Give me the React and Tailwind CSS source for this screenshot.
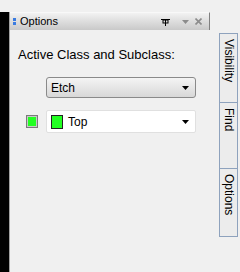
import React from "react";

function Pin() {
  return (
    <svg width="9" height="8" viewBox="0 0 9 8" className="block">
      <rect x="0" y="1" width="9" height="1" fill="#000" />
      <rect x="4" y="1" width="1" height="7" fill="#000" />
      <rect x="2" y="2" width="5" height="3" fill="none" stroke="#000" strokeWidth="1" />
    </svg>
  );
}

function Arrow({ color = "#000" }) {
  return (
    <svg width="7" height="4" viewBox="0 0 7 4" className="block">
      <path d="M0 0H7L3.5 4Z" fill={color} />
    </svg>
  );
}

function CloseX() {
  return (
    <svg width="7" height="7" viewBox="0 0 7 7" className="block">
      <path d="M0.5 0.5L6.5 6.5M6.5 0.5L0.5 6.5" stroke="#8c8c8c" strokeWidth="1.6" />
    </svg>
  );
}

export default function App() {
  return (
    <div className="w-[240px] h-[272px] bg-[#f0f0f0] flex overflow-hidden font-['Liberation_Sans',sans-serif] text-[12px] text-black">
      {/* left black strip */}
      <div className="w-[9px] flex flex-col">
        <div className="h-[12px]" />
        <div className="flex-1 bg-black" />
      </div>
      <div className="w-px flex flex-col">
        <div className="h-[12px]" />
        <div className="flex-1 bg-[#a0a0a0]" />
      </div>

      {/* main panel */}
      <div className="w-[200px] flex flex-col">
        <div className="h-[12px]" />
        <div className="h-[18px] flex items-center border-t border-[#f8f8f8] border-r border-r-[#808080] bg-gradient-to-b from-[#f2f2f2] to-[#c9c9c9]">
          <div className="ml-[3px] flex flex-col gap-[1px]">
            <div className="w-[3px] h-[3px] bg-[#3a7be0]" />
            <div className="w-[3px] h-[3px] bg-[#3a7be0]" />
          </div>
          <span className="ml-[4px] text-[11px] leading-none">Options</span>
          <div className="ml-auto flex items-center">
            <div className="mr-[12px]"><Pin /></div>
            <div className="mr-[6px]"><Arrow color="#8c8c8c" /></div>
            <div className="mr-[7px]"><CloseX /></div>
          </div>
        </div>

        <div className="pl-[8px] pt-[18px] text-[13px] leading-[14px]">Active Class and Subclass:</div>

        <div className="mt-[15px] ml-[36px] w-[150px] h-[21px] rounded-[3px] border border-[#8a8a8a] bg-gradient-to-b from-[#f4f4f4] to-[#d8d8d8] flex items-center pl-[4px] pr-[6px]">
          <span className="text-[12px] leading-none">Etch</span>
          <div className="ml-auto"><Arrow /></div>
        </div>

        <div className="mt-[12px] flex items-center">
          <div className="ml-[16px] w-[12px] h-[13px] border border-[#7a7a7a] bg-[#c8c8c8] flex items-center justify-center">
            <div className="w-[8px] h-[9px] bg-[#22ff22]" />
          </div>
          <div className="ml-[8px] w-[150px] h-[23px] rounded-[2px] border border-[#e0e0e0] bg-white flex items-center pl-[4px] pr-[6px]">
            <div className="w-[12px] h-[14px] border border-[#222] bg-[#22ff22]" />
            <span className="ml-[5px] text-[12px] leading-none">Top</span>
            <div className="ml-auto"><Arrow /></div>
          </div>
        </div>
      </div>

      {/* vertical tabs */}
      <div className="ml-[9px] w-[19px] flex flex-col">
        <div className="h-[33px]" />
        <div className="h-[70px] border border-[#8ea2bd] bg-[#ececec] flex justify-center pt-[5px]">
          <span className="[writing-mode:vertical-rl] leading-none">Visibility</span>
        </div>
        <div className="h-[66px] border-x border-b border-[#8ea2bd] bg-[#ececec] flex justify-center pt-[5px]">
          <span className="[writing-mode:vertical-rl] leading-none">Find</span>
        </div>
        <div className="h-[68px] border-x border-b border-[#8ea2bd] bg-[#ececec] flex justify-center pt-[5px]">
          <span className="[writing-mode:vertical-rl] leading-none">Options</span>
        </div>
      </div>
    </div>
  );
}
